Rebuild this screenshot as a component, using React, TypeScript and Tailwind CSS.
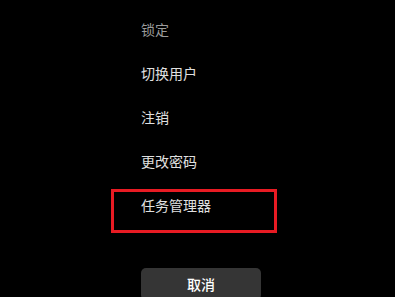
const items = [
  { label: "锁定", dim: true },
  { label: "切换用户" },
  { label: "注销" },
  { label: "更改密码" },
  { label: "任务管理器", focused: true },
];

export default function App() {
  return (
    <div
      className="w-[395px] h-[297px] overflow-hidden bg-black pt-[13px]"
      style={{ fontFamily: '"Noto Sans CJK SC", "Noto Sans", sans-serif' }}
    >
      <ul className="flex flex-col">
        {items.map((it) => (
          <li
            key={it.label}
            className={
              "ml-[111px] w-[166px] h-[44px] border-[3px] pl-[27px] pt-[3px] text-[14px] leading-[20px] " +
              (it.focused ? "border-[#e81b23]" : "border-transparent") +
              " " +
              (it.dim ? "text-[#9a9a9a]" : "text-[#e0e0e0]")
            }
          >
            {it.label}
          </li>
        ))}
      </ul>
      <button className="mt-[35px] ml-[141px] w-[120px] h-8 rounded-[5px] bg-[#353535] text-[14px] font-medium text-white leading-8">
        取消
      </button>
    </div>
  );
}
